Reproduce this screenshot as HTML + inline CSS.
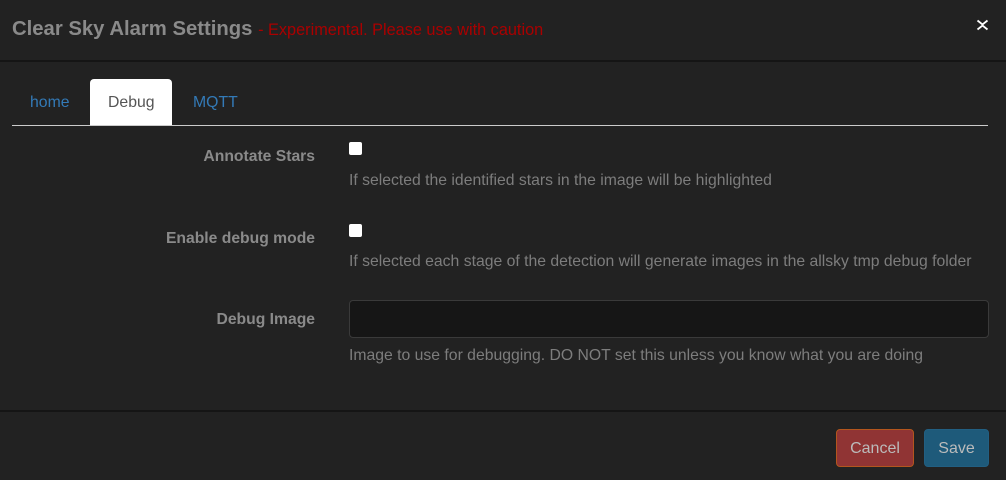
<!DOCTYPE html>
<html><head><style>
body{margin:0;width:1006px;height:480px;background:#222;font-family:"Liberation Sans",sans-serif;position:relative;overflow:hidden}
.a{position:absolute;white-space:nowrap}
.lbl{color:#8a8a8a;font-weight:bold;font-size:15.7px;text-align:right;width:315px;left:0}
.help{color:#7d7d7d;font-size:15.75px;left:349px}
.cb{position:absolute;left:349px;width:13px;height:13px;background:#fff;border-radius:2px}
</style></head><body>
<div class="a" style="left:12px;top:18px;font-size:20.3px;font-weight:bold;color:#8a8a8a">Clear Sky Alarm Settings <span style="font-weight:normal;font-size:16.3px;color:#a00">- Experimental. Please use with caution</span></div>
<svg class="a" style="left:976px;top:19px" width="13" height="12" viewBox="0 0 13 12"><path d="M1.5 1.5 L6.5 5.5 L11.5 1.5 M1.5 10.5 L6.5 6.5 L11.5 10.5" stroke="#fff" stroke-width="1.8" fill="none"/></svg>
<div class="a" style="left:0;top:60px;width:1006px;height:2px;background:#151515"></div>
<div class="a" style="left:30px;top:94px;font-size:15.8px;color:#337ab7">home</div>
<div class="a" style="left:90px;top:79px;width:82px;height:47px;background:#fff;border-radius:4px 4px 0 0"></div>
<div class="a" style="left:108px;top:94px;font-size:15.8px;color:#555">Debug</div>
<div class="a" style="left:193px;top:94px;font-size:15.8px;color:#337ab7">MQTT</div>
<div class="a" style="left:12px;top:125px;width:976px;height:1px;background:#ccc"></div>
<div class="a lbl" style="top:148px">Annotate Stars</div>
<div class="cb" style="top:142px"></div>
<div class="a help" style="top:172px">If selected the identified stars in the image will be highlighted</div>
<div class="a lbl" style="top:230px">Enable debug mode</div>
<div class="cb" style="top:224px"></div>
<div class="a help" style="top:253px">If selected each stage of the detection will generate images in the allsky tmp debug folder</div>
<div class="a lbl" style="top:311px">Debug Image</div>
<div class="a" style="left:349px;top:300px;width:638px;height:36px;background:#161616;border:1px solid #3a3a3a;border-radius:4px"></div>
<div class="a help" style="top:347px">Image to use for debugging. DO NOT set this unless you know what you are doing</div>
<div class="a" style="left:0;top:410px;width:1006px;height:2px;background:#151515"></div>
<div class="a" style="left:836px;top:429px;width:76px;height:36px;background:#903434;border:1px solid #b3561e;border-radius:4px;color:#bbb;font-size:16px;text-align:center;line-height:38px">Cancel</div>
<div class="a" style="left:924px;top:429px;width:63px;height:36px;background:#1e5a7a;border:1px solid #225f82;border-radius:4px;color:#bbb;font-size:16px;text-align:center;line-height:38px">Save</div>
</body></html>
